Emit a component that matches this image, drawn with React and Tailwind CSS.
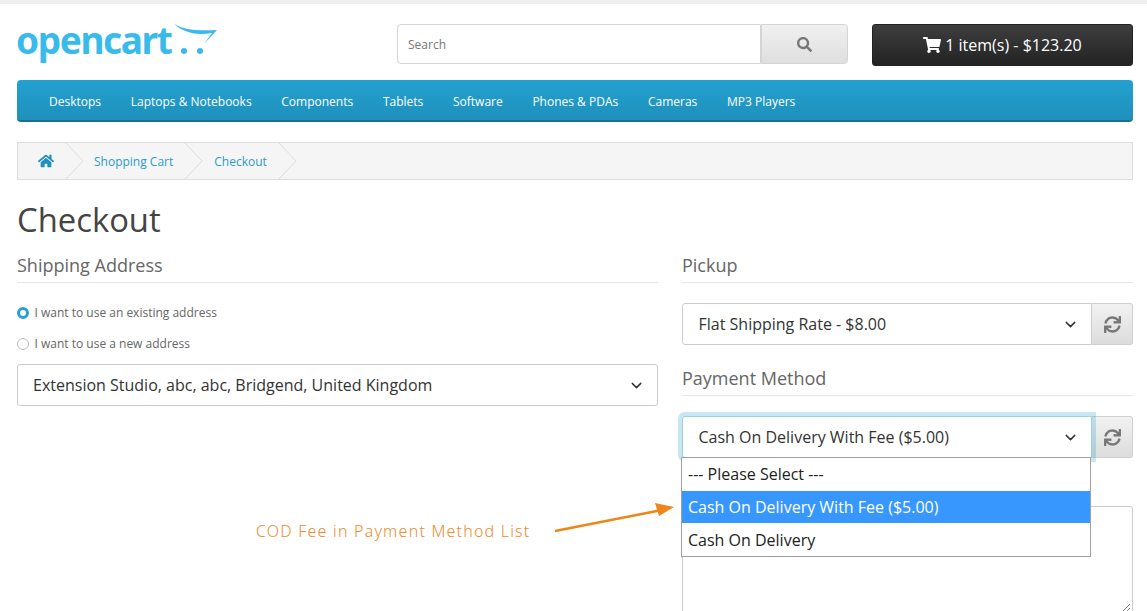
import { FaHome, FaSearch, FaShoppingCart, FaSync } from 'react-icons/fa'
import { ChevronDown } from 'lucide-react'

const navItems = ['Desktops', 'Laptops & Notebooks', 'Components', 'Tablets', 'Software', 'Phones & PDAs', 'Cameras', 'MP3 Players']

function Logo() {
  return (
    <div className="flex items-start w-[201px] h-[38px]">
      <span className="font-['Noto_Sans'] font-bold text-[37px] leading-[38px] tracking-[-1.4px] text-[#38bbea] h-[38px] w-[157px] shrink-0 -mt-[3px] -ml-[1px] mr-[1px]">opencart</span>
      <svg width="44" height="32" viewBox="0 0 44 32" className="shrink-0 -mt-[1px]" fill="#38bbea">
        <path d="M0 0 C 7 7, 24 8, 43 7 L 30 21 L 38 10 C 22 13, 7 9, 0 0 Z" />
        <circle cx="10" cy="28" r="3" />
        <circle cx="26" cy="28" r="3" />
      </svg>
    </div>
  )
}

function Crumb({ children }) {
  return (
    <div className="flex h-full items-center">
      <div className="flex items-center">{children}</div>
      <svg width="20" height="36" viewBox="0 0 20 36" className="shrink-0" fill="none" stroke="#dddddd">
        <path d="M1 0 L18 18 L1 36" />
      </svg>
    </div>
  )
}

function SelectBox({ label, focused }) {
  return (
    <div className={`flex-1 min-w-0 h-[42px] flex items-center justify-between bg-white border pl-4 pr-[12px] text-[16px] text-[#333] rounded-l-[3px] ${focused ? 'relative z-10 border-[#9ecfe3] shadow-[0_0_0_4px_rgba(35,160,208,0.25)]' : 'border-[#cccccc]'}`}>
      <span className="-ml-[0.5px]">{label}</span>
      <ChevronDown size={17} strokeWidth={2} className="text-[#333]" />
    </div>
  )
}

function RefreshButton() {
  return (
    <div className="w-[41px] h-[42px] flex items-center justify-center border border-l-0 border-[#d0d0d0] rounded-r-[3px] bg-gradient-to-b from-[#f2f2f2] to-[#dcdcdc]">
      <FaSync size={17} className="text-[#777]" />
    </div>
  )
}

function SectionTitle({ children }) {
  return <h2 className="text-[18px] leading-[24px] text-[#666] pb-[5px] border-b border-[#e5e5e5]">{children}</h2>
}

export default function App() {
  return (
    <div className="relative h-[611px] overflow-hidden bg-white font-['Open_Sans',sans-serif] border-t-[4px] border-[#eeeeee]">
      <div className="px-[17px] pr-[14px]">
        {/* Header */}
        <div className="flex items-start pt-[20px] h-[76px]">
          <div className="w-[380px]">
            <Logo />
          </div>
          <div className="flex w-[451px] h-[40px]">
            <div className="flex-1 flex items-center bg-white border border-[#d4d4d4] rounded-l-[4px] pl-[10px] pt-[1px] text-[12px] text-[#777]">Search</div>
            <div className="w-[87px] flex items-center justify-center border border-[#d4d4d4] rounded-r-[4px] bg-gradient-to-b from-[#f0f0f0] to-[#dfdfdf]">
              <FaSearch size={15} className="text-[#777]" />
            </div>
          </div>
          <div className="ml-[24px] w-[261px] h-[42px] flex items-center justify-center gap-[4px] rounded-[3px] border border-[#222] bg-gradient-to-b from-[#3e3e3e] to-[#232323] text-white text-[16px]">
            <FaShoppingCart size={18} />
            <span>1 item(s) - $123.20</span>
          </div>
        </div>

        {/* Nav */}
        <nav className="h-[42px] flex items-center pl-[32px] pt-[3px] gap-[29.7px] rounded-[4px] border-b-2 border-[#1a6f94] bg-gradient-to-b from-[#23a1d1] to-[#1f90bb] text-white text-[12px]">
          {navItems.map((item) => (
            <span key={item}>{item}</span>
          ))}
        </nav>

        {/* Breadcrumb */}
        <div className="mt-[20px] h-[38px] flex items-center bg-[#f5f5f5] border border-[#dddddd] text-[12px] text-[#2a9cc8]">
          <Crumb>
            <div className="pl-[20px] pr-[11px]"><FaHome size={16} className="text-[#1f8fbd]" /></div>
          </Crumb>
          <Crumb>
            <span className="pl-[9px] pr-[11px] pt-[1px]">Shopping Cart</span>
          </Crumb>
          <Crumb>
            <span className="pl-[10px] pr-[11px] pt-[1px]">Checkout</span>
          </Crumb>
        </div>

        <h1 className="mt-[18px] text-[32.8px] leading-[44px] text-[#444]">Checkout</h1>

        <div className="mt-[11px] flex gap-[24px]">
          {/* Left column */}
          <div className="w-[641px]">
            <SectionTitle>Shipping Address</SectionTitle>
            <div className="mt-[21px] flex items-center gap-[5.5px] h-[18px] text-[12px] text-[#666]">
              <span className="w-[12px] h-[12px] rounded-full border-[3.5px] border-[#23a1d1] bg-white" />
              I want to use an existing address
            </div>
            <div className="mt-[13px] flex items-center gap-[5.5px] h-[18px] text-[12px] text-[#666]">
              <span className="w-[12px] h-[12px] rounded-full border border-[#bbb] bg-white" />
              I want to use a new address
            </div>
            <div className="mt-[11px] h-[42px] flex items-center justify-between bg-white border border-[#cccccc] rounded-[3px] pl-[15px] pr-[12px] text-[16px] text-[#333]">
              <span>Extension Studio, abc, abc, Bridgend, United Kingdom</span>
              <ChevronDown size={17} strokeWidth={2} className="text-[#333]" />
            </div>
          </div>

          {/* Right column */}
          <div className="flex-1 min-w-0">
            <SectionTitle>Pickup</SectionTitle>
            <div className="mt-[20px] flex">
              <SelectBox label="Flat Shipping Rate - $8.00" />
              <RefreshButton />
            </div>
            <div className="mt-[21px]">
              <SectionTitle>Payment Method</SectionTitle>
            </div>
            <div className="mt-[20px] flex">
              <SelectBox label="Cash On Delivery With Fee ($5.00)" focused />
              <RefreshButton />
            </div>
            <div className="relative mt-[48px] h-[108px] border border-[#cccccc] rounded-[3px]">
              <svg className="absolute right-[1px] bottom-[1px]" width="9" height="9" viewBox="0 0 9 9" stroke="#888" fill="none">
                <path d="M1 8 L8 1 M5 8 L8 5" />
              </svg>
            </div>
          </div>
        </div>
      </div>

      {/* Open option list */}
      <div className="absolute left-[681px] top-[453px] z-20 w-[410px] h-[100px] bg-white border border-[#a0a0a0] text-[16px] text-[#222]">
        <div className="h-[33px] flex items-center pl-[6px] pb-[2px]">--- Please Select ---</div>
        <div className="h-[32px] flex items-center pl-[6px] bg-[#3797fe] text-white">Cash On Delivery With Fee ($5.00)</div>
        <div className="h-[33px] flex items-center pl-[6px]">Cash On Delivery</div>
      </div>

      {/* Annotation */}
      <span className="absolute left-[256px] top-[515px] font-['Noto_Sans'] font-light text-[16px] leading-[24px] tracking-[1.2px] text-[#ee8a2e]">COD Fee in Payment Method List</span>
      <svg className="absolute left-[550px] top-[495px]" width="130" height="36" viewBox="0 0 130 36">
        <path d="M5 32 L112 11" stroke="#f08519" strokeWidth="2.5" fill="none" />
        <path d="M124 8 L105 4 L109 17 Z" fill="#f08519" />
      </svg>
    </div>
  )
}
